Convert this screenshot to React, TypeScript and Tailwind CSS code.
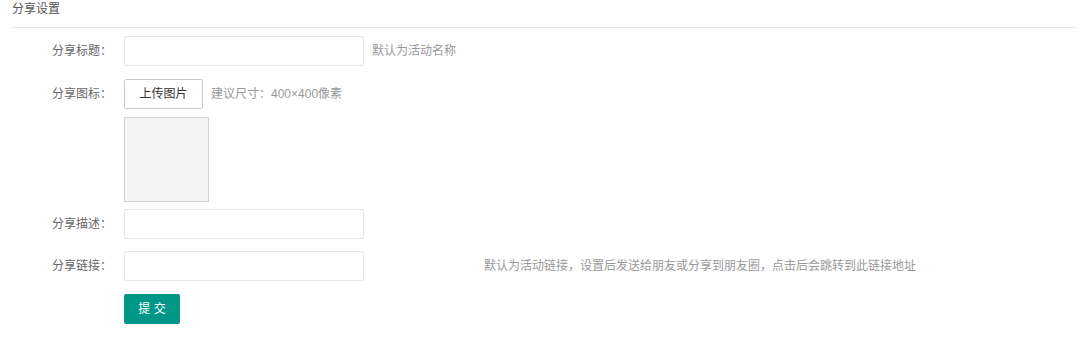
const font = { fontFamily: '"Liberation Sans", "Noto Sans CJK SC", sans-serif' };

function Row({ label, children, className = "" }: { label?: string; children: React.ReactNode; className?: string }) {
  return (
    <div className={`flex items-center ${className}`}>
      <div className="w-[100px] shrink-0 text-right text-[12px] leading-[16px] text-[#666]">{label}</div>
      <div className="ml-3 flex items-center">{children}</div>
    </div>
  );
}

function Hint({ text, className = "ml-2" }: { text: string; className?: string }) {
  return <span className={`text-[12px] leading-[16px] text-[#999] ${className}`}>{text}</span>;
}

function TextInput() {
  return <input className="h-[30px] w-[240px] rounded-[2px] border border-[#e6e6e6] bg-white px-2 text-[12px] outline-none" />;
}

export default function App() {
  return (
    <div className="min-h-screen w-full bg-white pl-3 pr-[15px]" style={font}>
      <div className="h-[28px] border-b border-[#e6e6e6] pt-[1px] text-[12px] leading-[16px] text-[#555]">分享设置</div>

      <div className="pt-2">
        <Row label="分享标题：">
          <TextInput />
          <Hint text="默认为活动名称" />
        </Row>

        <Row label="分享图标：" className="mt-[13px]">
          <button className="flex h-[30px] w-[79px] items-center justify-center rounded-[2px] border border-[#c9c9c9] bg-white text-[12px] leading-[16px] text-[#333]">
            上传图片
          </button>
          <Hint text="建议尺寸：400×400像素" />
        </Row>

        <Row className="mt-2">
          <div className="h-[85px] w-[85px] border border-[#d2d2d2] bg-[#f4f4f4]" />
        </Row>

        <Row label="分享描述：" className="mt-[7px]">
          <TextInput />
        </Row>

        <Row label="分享链接：" className="mt-3">
          <TextInput />
          <Hint text="默认为活动链接，设置后发送给朋友或分享到朋友圈，点击后会跳转到此链接地址" className="ml-[120px]" />
        </Row>

        <Row className="mt-[13px]">
          <button className="flex h-[30px] w-[56px] items-center justify-center rounded-[2px] bg-[#009688] text-[12px] leading-[16px] text-white">
            提 交
          </button>
        </Row>
      </div>
    </div>
  );
}
